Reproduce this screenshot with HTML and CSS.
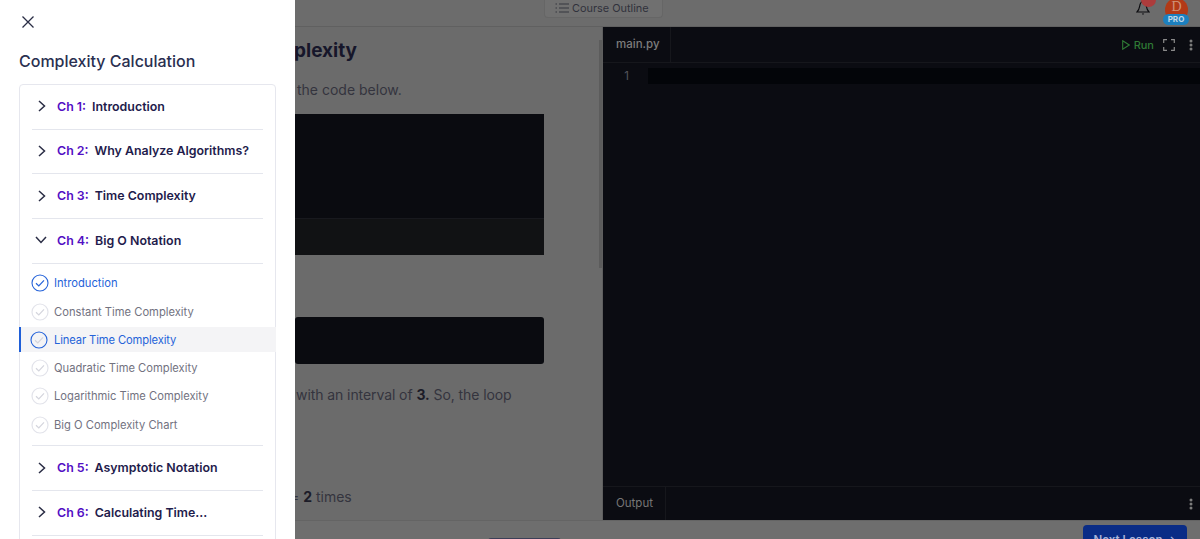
FILE: index.html
```html
<!DOCTYPE html>
<html lang="en">
<head>
<meta charset="utf-8">
<title>Complexity Calculation</title>
<link rel="stylesheet" href="styles.css">
</head>
<body>
<div class="page">
  <header class="topbar">
    <button class="outline-btn">
      <svg class="outline-icon" viewBox="0 0 14 12" width="14" height="12"><path d="M4 2h10M4 6h10M4 10h10" stroke="#34363f" stroke-width="1" fill="none"/><path d="M0.500 2h1.500M0.500 6h1.500M0.500 10h1.500" stroke="#34363f" stroke-width="1" fill="none"/></svg>
      Course Outline
    </button>
    <div class="user">
      <div class="bell">
        <svg viewBox="0 0 14 16" width="14" height="16"><path d="M7 1.500C4.600 1.500 4 4 3.600 6.500 3.200 9 2.400 10.500 1 12h12c-1.400-1.500-2.200-3-2.600-5.500C10 4 9.400 1.500 7 1.500z" fill="none" stroke="#0c0c10" stroke-width="1.200"/><path d="M5.800 13.500h2.400L7 15z" fill="#0c0c10"/></svg>
        <span class="badge"></span>
      </div>
      <div class="avatar"><span class="avatar-letter">D</span><span class="pro">PRO</span></div>
    </div>
  </header>
  <div class="workspace">
    <main class="lesson">
      <span class="scroll-thumb"></span>
      <h1 class="lesson-title">plexity</h1>
      <p class="para para-first">the code below.</p>
      <div class="code-block">
        <div class="code-src"></div>
        <div class="code-out"></div>
      </div>
      <div class="snippet"></div>
      <p class="para para-loop">with an interval of <b>3.</b> So, the loop</p>
      <p class="para para-times">= <b>2</b> times</p>
    </main>
    <section class="editor">
      <div class="editor-tabs">
        <div class="tab">main.py</div>
        <div class="tools">
          <span class="run">
            <svg viewBox="0 0 8 10" width="8" height="10"><path d="M0.700 0.800l6.500 4.200-6.500 4.200z" fill="none" stroke="#2f7a35" stroke-width="1.100"/></svg>
            Run
          </span>
          <svg class="tool-full" viewBox="0 0 12 12" width="12" height="12"><path d="M0.700 4V0.700H4M8 0.700h3.300V4M11.300 8v3.300H8M4 11.300H0.700V8" fill="none" stroke="#8a8a8a" stroke-width="1.200"/></svg>
          <svg class="tool-dots" viewBox="0 0 4 12" width="4" height="12"><circle cx="2" cy="2" r="1.500" fill="#7c7c7c"/><circle cx="2" cy="6" r="1.500" fill="#7c7c7c"/><circle cx="2" cy="10" r="1.500" fill="#7c7c7c"/></svg>
        </div>
      </div>
      <div class="code-area">
        <span class="line-no">1</span>
        <span class="active-line"></span>
      </div>
      <div class="output-bar">
        <div class="output-tab">Output</div>
        <svg class="tool-dots" viewBox="0 0 4 12" width="4" height="12"><circle cx="2" cy="2" r="1.500" fill="#7c7c7c"/><circle cx="2" cy="6" r="1.500" fill="#7c7c7c"/><circle cx="2" cy="10" r="1.500" fill="#7c7c7c"/></svg>
      </div>
    </section>
  </div>
  <footer class="bottombar">
    <span class="mark-btn"></span>
    <button class="next-btn">Next Lesson →</button>
  </footer>

  <aside class="drawer">
    <svg class="close" viewBox="0 0 12 12" width="12" height="12"><path d="M0.500 0.500l11 11M11.500 0.500l-11 11" stroke="#2a2d45" stroke-width="1.300" fill="none"/></svg>
    <h2 class="drawer-title">Complexity Calculation</h2>
    <div class="outline">
      <div class="chapter">
        <svg class="chev" viewBox="0 0 8 12" width="8" height="12"><path d="M1 1l5.500 5L1 11" fill="none" stroke="#2a2d45" stroke-width="1.500"/></svg>
        <span class="ch-no">Ch 1:</span><span class="ch-name">Introduction</span>
      </div>
      <div class="chapter">
        <svg class="chev" viewBox="0 0 8 12" width="8" height="12"><path d="M1 1l5.500 5L1 11" fill="none" stroke="#2a2d45" stroke-width="1.500"/></svg>
        <span class="ch-no">Ch 2:</span><span class="ch-name">Why Analyze Algorithms?</span>
      </div>
      <div class="chapter">
        <svg class="chev" viewBox="0 0 8 12" width="8" height="12"><path d="M1 1l5.500 5L1 11" fill="none" stroke="#2a2d45" stroke-width="1.500"/></svg>
        <span class="ch-no">Ch 3:</span><span class="ch-name">Time Complexity</span>
      </div>
      <div class="chapter">
        <svg class="chev-open" viewBox="0 0 12 8" width="12" height="8"><path d="M1 1l5 5.500L11 1" fill="none" stroke="#2a2d45" stroke-width="1.500"/></svg>
        <span class="ch-no">Ch 4:</span><span class="ch-name">Big O Notation</span>
      </div>
      <ul class="lessons">
        <li class="item item-done">
          <svg class="tick" viewBox="0 0 18 18" width="18" height="18"><circle cx="9" cy="9" r="8" fill="none" stroke="#2563d9" stroke-width="1.100"/><path d="M5 9.300l2.800 2.700L13 6.300" fill="none" stroke="#2563d9" stroke-width="1.200"/></svg>
          Introduction
        </li>
        <li class="item">
          <svg class="tick" viewBox="0 0 18 18" width="18" height="18"><circle cx="9" cy="9" r="8" fill="none" stroke="#e2e3ea" stroke-width="1.200"/><path d="M5 9.300l2.800 2.700L13 6.300" fill="none" stroke="#d4d5dd" stroke-width="1.200"/></svg>
          Constant Time Complexity
        </li>
        <li class="item item-current">
          <svg class="tick" viewBox="0 0 18 18" width="18" height="18"><circle cx="9" cy="9" r="8" fill="none" stroke="#2563d9" stroke-width="1.100"/><path d="M5 9.300l2.800 2.700L13 6.300" fill="none" stroke="#d4d5dd" stroke-width="1.200"/></svg>
          Linear Time Complexity
        </li>
        <li class="item">
          <svg class="tick" viewBox="0 0 18 18" width="18" height="18"><circle cx="9" cy="9" r="8" fill="none" stroke="#e2e3ea" stroke-width="1.200"/><path d="M5 9.300l2.800 2.700L13 6.300" fill="none" stroke="#d4d5dd" stroke-width="1.200"/></svg>
          Quadratic Time Complexity
        </li>
        <li class="item">
          <svg class="tick" viewBox="0 0 18 18" width="18" height="18"><circle cx="9" cy="9" r="8" fill="none" stroke="#e2e3ea" stroke-width="1.200"/><path d="M5 9.300l2.800 2.700L13 6.300" fill="none" stroke="#d4d5dd" stroke-width="1.200"/></svg>
          Logarithmic Time Complexity
        </li>
        <li class="item">
          <svg class="tick" viewBox="0 0 18 18" width="18" height="18"><circle cx="9" cy="9" r="8" fill="none" stroke="#e2e3ea" stroke-width="1.200"/><path d="M5 9.300l2.800 2.700L13 6.300" fill="none" stroke="#d4d5dd" stroke-width="1.200"/></svg>
          Big O Complexity Chart
        </li>
      </ul>
      <div class="chapter">
        <svg class="chev" viewBox="0 0 8 12" width="8" height="12"><path d="M1 1l5.500 5L1 11" fill="none" stroke="#2a2d45" stroke-width="1.500"/></svg>
        <span class="ch-no">Ch 5:</span><span class="ch-name">Asymptotic Notation</span>
      </div>
      <div class="chapter">
        <svg class="chev" viewBox="0 0 8 12" width="8" height="12"><path d="M1 1l5.500 5L1 11" fill="none" stroke="#2a2d45" stroke-width="1.500"/></svg>
        <span class="ch-no">Ch 6:</span><span class="ch-name">Calculating Time...</span>
      </div>
    </div>
  </aside>
</div>
</body>
</html>
```

FILE: styles.css
```css
* { box-sizing: border-box; }
html, body { margin: 0; padding: 0; height: 100%; overflow: hidden; }
body { font-family: Inter, "Noto Sans", sans-serif; background: #6b6b6b; }
.page { position: relative; width: 1200px; height: 539px; overflow: hidden; display: flex; flex-direction: column; }

/* top bar */
.topbar { height: 27px; flex: none; display: flex; align-items: flex-start; padding-left: 544px; background: #6c6c6c; border-bottom: 1px solid #606060; }
.outline-btn { width: 119px; height: 18px; display: flex; align-items: center; gap: 3px; padding: 0 0 2px 10px; background: #707070; border: 1px solid #666; border-top: 0; border-radius: 0 0 4px 4px; font: 400 10.9px Inter, sans-serif; color: #30323c; white-space: nowrap; }
.outline-icon { flex: none; }
.user { margin-left: auto; display: flex; gap: 13px; margin-right: 11px; }
.bell { position: relative; width: 14px; height: 16px; }
.badge { position: absolute; left: 5px; top: -7px; width: 15px; height: 14px; border-radius: 50%; background: #ad3c3c; }
.avatar { position: relative; width: 26px; height: 25px; }
.avatar-letter { position: absolute; left: 2px; top: -2px; width: 23px; height: 24px; border-radius: 50%; background: #b23a17; color: #cf9379; font: 400 14px/18px "Liberation Serif", serif; text-align: center; }
.pro { position: absolute; left: 0; top: 14px; width: 26px; height: 11px; border-radius: 6px; background: #1c80bf; color: #c4d8e6; font: 700 8px/11px Inter, sans-serif; text-align: center; }

/* main split */
.workspace { flex: none; height: 493px; display: flex; }
.lesson { position: relative; flex: none; width: 603px; padding: 10px 58px 0 295px; overflow: hidden; border-right: 1px solid #5f5f5f; }
.scroll-thumb { position: absolute; right: 0; top: 13px; width: 3px; height: 228px; background: #5c5c5c; }
.lesson-title { margin: 0 0 0 -1px; font-size: 19px; line-height: 28px; font-weight: 700; color: #16162a; white-space: nowrap; }
.para { margin: 0; font-size: 14px; line-height: 24px; color: #34343e; white-space: nowrap; }
.para b { color: #1c1c28; font-weight: 700; }
.para-first { margin: 13px 0 0 2px; }
.code-block { margin-top: 12px; height: 141px; background: #0a0b10; display: flex; flex-direction: column; }
.code-src { flex: none; height: 105px; border-bottom: 1px solid #18191e; }
.code-out { flex: 1; background: #111214; }
.snippet { margin-top: 62px; height: 47px; background: #0a0b10; border-radius: 3px; }
.para-loop { margin: 19px 0 0 1px; letter-spacing: -0.08px; }
.para-times { margin: 78px 0 0 -5px; }

/* editor */
.editor { flex: 1; min-width: 0; background: #0b0c12; display: flex; flex-direction: column; }
.editor-tabs { flex: none; height: 36px; display: flex; align-items: stretch; border-bottom: 1px solid #16171c; }
.tab { width: 68px; padding-left: 13px; font-size: 11.5px; line-height: 34px; font-weight: 500; color: #7d7d7d; border-right: 1px solid #16171c; }
.tools { margin-left: auto; display: flex; align-items: center; margin-right: 7px; }
.run { display: flex; align-items: center; gap: 4px; font-size: 11px; font-weight: 500; color: #2f7a35; }
.tool-full { margin-left: 9px; }
.tool-dots { margin-left: 14px; flex: none; }
.code-area { flex: 1; display: flex; align-items: flex-start; padding-top: 5px; }
.line-no { width: 45px; padding-right: 19px; text-align: right; font-size: 11.5px; line-height: 16px; color: #55565c; }
.active-line { flex: 1; height: 16px; background: #030509; }
.output-bar { flex: none; height: 34px; display: flex; align-items: center; justify-content: space-between; padding-right: 7px; border-top: 1px solid #16171c; }
.output-tab { width: 63px; height: 100%; padding-left: 13px; font-size: 11.5px; line-height: 32px; color: #767676; border-right: 1px solid #16171c; }

/* footer */
.bottombar { flex: 1; position: relative; display: flex; align-items: flex-start; background: #6e6e6e; border-top: 1px solid #646464; padding: 4px 13px 0 488px; }
.mark-btn { margin-top: 13px; width: 73px; height: 30px; background: #3c3f58; border-radius: 3px; }
.next-btn { margin-left: auto; width: 104px; height: 29px; background: #0a2c86; border: 0; border-radius: 4px; color: #a6b4da; font: 600 11.5px Inter, sans-serif; white-space: nowrap; padding: 0; }

/* drawer */
.drawer { position: absolute; left: 0; top: 0; width: 295px; height: 539px; background: #fff; overflow: hidden; padding: 0 19px; }
.close { display: block; margin: 16px 0 0 3px; }
.drawer-title { margin: 21px 0 0; font-size: 16px; line-height: 24px; font-weight: 500; color: #2a2f50; white-space: nowrap; }
.outline { margin-top: 11px; width: 257px; height: 600px; padding: 0 12px; border: 1px solid #e6e7ee; border-radius: 4px; }
.chapter { height: 44.67px; padding-bottom: 1px; display: flex; align-items: center; border-bottom: 1px solid #e4e6ed; font-size: 12.4px; font-weight: 600; white-space: nowrap; }
.chev { flex: none; margin: 0 11px 0 6px; }
.chev-open { flex: none; margin: 0 10px 0 3px; }
.ch-no { color: #5310c4; margin-right: 6px; }
.ch-name { color: #1f1c4c; }
.lessons { list-style: none; margin: 0; padding: 5.5px 0 6.5px; border-bottom: 1px solid #e4e6ed; }
.item { position: relative; height: 28.3px; display: flex; align-items: center; gap: 5px; font-size: 11.2px; color: #72727f; white-space: nowrap; }
.item .tick { margin-left: -1px; }
.item-done { color: #2563d9; }
.item-current { color: #2563d9; height: 25px; margin: 1.65px -13px; padding-left: 10px; gap: 6px; letter-spacing: -0.12px; background: #f4f4f6; border-left: 2px solid #1f5fd8; }
.tick { flex: none; }
```
